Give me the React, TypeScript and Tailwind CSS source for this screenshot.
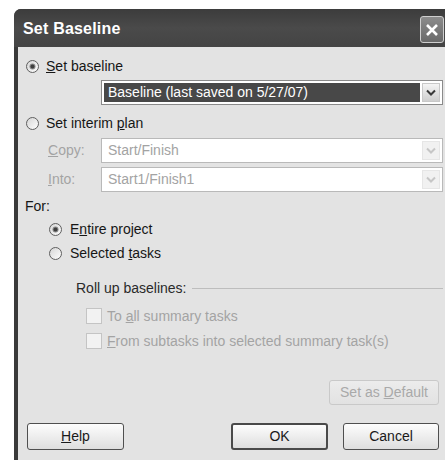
import React from "react";

const font = { fontFamily: '"Liberation Sans", Arial, sans-serif' };

function Radio({ checked }: { checked?: boolean }) {
  return (
    <svg width="13" height="13" viewBox="0 0 13 13" className="shrink-0">
      <defs>
        <linearGradient id="rf" x1="0" y1="0" x2="1" y2="1">
          <stop offset="0" stopColor="#d4d4d4" />
          <stop offset="1" stopColor="#ffffff" />
        </linearGradient>
      </defs>
      <circle cx="6.5" cy="6.5" r="6" fill="url(#rf)" stroke="#5e5e5e" strokeWidth="1" />
      {checked && (
        <>
          <circle cx="6.5" cy="6.5" r="3" fill="#8a8a8a" />
          <circle cx="6.5" cy="6.5" r="2" fill="#3e3e3e" />
        </>
      )}
    </svg>
  );
}

function Check() {
  return <div className="w-[16px] h-[16px] border border-[#c4c4c4] bg-[#f2f2f2] shrink-0" />;
}

function Arrow({ enabled }: { enabled?: boolean }) {
  return (
    <div
      className={
        "w-[18px] h-[19px] flex items-center justify-center border " +
        (enabled
          ? "border-[#c8c8c8] bg-gradient-to-b from-[#f4f4f4] to-[#cfcfcf]"
          : "border-[#e6e6e6] bg-[#f1f1f1]")
      }
    >
      <svg width="10" height="7" viewBox="0 0 10 7">
        <path
          d="M1 1.5 L5 5.5 L9 1.5"
          fill="none"
          stroke={enabled ? "#3a3a3a" : "#c6c6c6"}
          strokeWidth="2"
        />
      </svg>
    </div>
  );
}

function Combo({ text, enabled }: { text: string; enabled?: boolean }) {
  return (
    <div
      className={
        "w-[342px] h-[25px] border bg-white flex items-center p-[2px] gap-[2px] " +
        (enabled ? "border-[#8a8a8a]" : "border-[#b9b9b9]")
      }
    >
      <div
        className={
          "flex-1 h-full flex items-center pl-[4px] text-[14px] " +
          (enabled ? "bg-[#484848] text-white" : "text-[#a3a3a3]")
        }
      >
        {text}
      </div>
      <Arrow enabled={enabled} />
    </div>
  );
}

function Button({
  children,
  width,
  isDefault,
  disabled,
}: {
  children: React.ReactNode;
  width: string;
  isDefault?: boolean;
  disabled?: boolean;
}) {
  return (
    <div
      className={
        width +
        " h-full rounded-[3px] flex items-center justify-center text-[14px] bg-gradient-to-b " +
        (disabled
          ? "border border-[#c9c9c9] text-[#a9a9a9] from-[#ececec] to-[#e2e2e2]"
          : isDefault
          ? "border-2 border-[#4a4a4a] text-[#1a1a1a] from-[#fdfdfd] to-[#dedede]"
          : "border border-[#4f4f4f] text-[#1a1a1a] from-[#fdfdfd] to-[#dedede]")
      }
    >
      {children}
    </div>
  );
}

export default function App() {
  return (
    <div className="w-[445px] h-[460px] bg-white overflow-hidden pl-[14px] pt-[9px]" style={font}>
      <div className="w-[440px] h-[460px] rounded-tl-[7px] bg-[#3a3a3a] pl-[4px] flex flex-col">
        {/* caption bar */}
        <div className="h-[38px] shrink-0 flex items-start justify-between bg-gradient-to-b from-[#3c3c3c] via-[#4a4a4a] to-[#444444] rounded-tl-[7px] -ml-[4px] pl-[9px]">
          <div className="mt-[10px] text-white font-bold text-[16px] leading-[20px] tracking-[0.2px]">
            Set Baseline
          </div>
          <div className="mt-[7px] mr-[10px] w-[24px] h-[27px] rounded-[3px] border border-[#cfcfcf] bg-gradient-to-b from-[#8c8c8c] to-[#6a6a6a] flex items-center justify-center">
            <svg width="14" height="14" viewBox="0 0 14 14">
              <path d="M2 2 L12 12 M12 2 L2 12" stroke="white" strokeWidth="2.6" />
            </svg>
          </div>
        </div>

        {/* dialog body */}
        <div className="flex-1 bg-[#e3e3e3] flex flex-col text-[14px] text-[#161616]">
          <div className="mt-[10px] h-[18px] flex items-center gap-[7px] pl-[8px]">
            <Radio checked />
            <span>
              <u>S</u>et baseline
            </span>
          </div>

          <div className="mt-[5px] pl-[83px]">
            <Combo text="Baseline (last saved on 5/27/07)" enabled />
          </div>

          <div className="mt-[9px] h-[18px] flex items-center gap-[7px] pl-[8px]">
            <Radio />
            <span>
              Set interim <u>p</u>lan
            </span>
          </div>

          <div className="mt-[6px] h-[25px] flex items-center pl-[30px]">
            <span className="w-[53px] text-[#a3a3a3]">
              <u>C</u>opy:
            </span>
            <Combo text="Start/Finish" />
          </div>

          <div className="mt-[4px] h-[25px] flex items-center pl-[30px]">
            <span className="w-[53px] text-[#a3a3a3]">
              <u>I</u>nto:
            </span>
            <Combo text="Start1/Finish1" />
          </div>

          <div className="mt-[6px] h-[16px] flex items-center pl-[7px]">For:</div>

          <div className="mt-[6px] h-[18px] flex items-center gap-[8px] pl-[31px]">
            <Radio checked />
            <span>
              E<u>n</u>tire project
            </span>
          </div>

          <div className="mt-[6px] h-[18px] flex items-center gap-[8px] pl-[31px]">
            <Radio />
            <span>
              Selected <u>t</u>asks
            </span>
          </div>

          <div className="mt-[17px] h-[18px] flex items-center gap-[5px] pl-[58px] pr-[11px]">
            <span className="text-[#2a2a2a]">Roll up baselines:</span>
            <div className="flex-1 h-[1px] bg-[#bdbdbd]" />
          </div>

          <div className="mt-[11px] h-[16px] flex items-center gap-[5px] pl-[68px] text-[#a3a3a3]">
            <Check />
            <span>
              To <u>a</u>ll summary tasks
            </span>
          </div>

          <div className="mt-[9px] h-[16px] flex items-center gap-[5px] pl-[68px] text-[#a3a3a3]">
            <Check />
            <span>
              <u>F</u>rom subtasks into selected summary task(s)
            </span>
          </div>

          <div className="mt-[31px] h-[25px] flex pl-[311px]">
            <Button width="w-[110px]" disabled>
              <span>
                Set as <u>D</u>efault
              </span>
            </Button>
          </div>

          <div className="mt-[18px] h-[27px] flex pl-[9px]">
            <Button width="w-[97px]">
              <span>
                <u>H</u>elp
              </span>
            </Button>
            <div className="w-[107px]" />
            <Button width="w-[97px]" isDefault>
              OK
            </Button>
            <div className="w-[15px]" />
            <Button width="w-[96px]">Cancel</Button>
          </div>
        </div>
      </div>
    </div>
  );
}
